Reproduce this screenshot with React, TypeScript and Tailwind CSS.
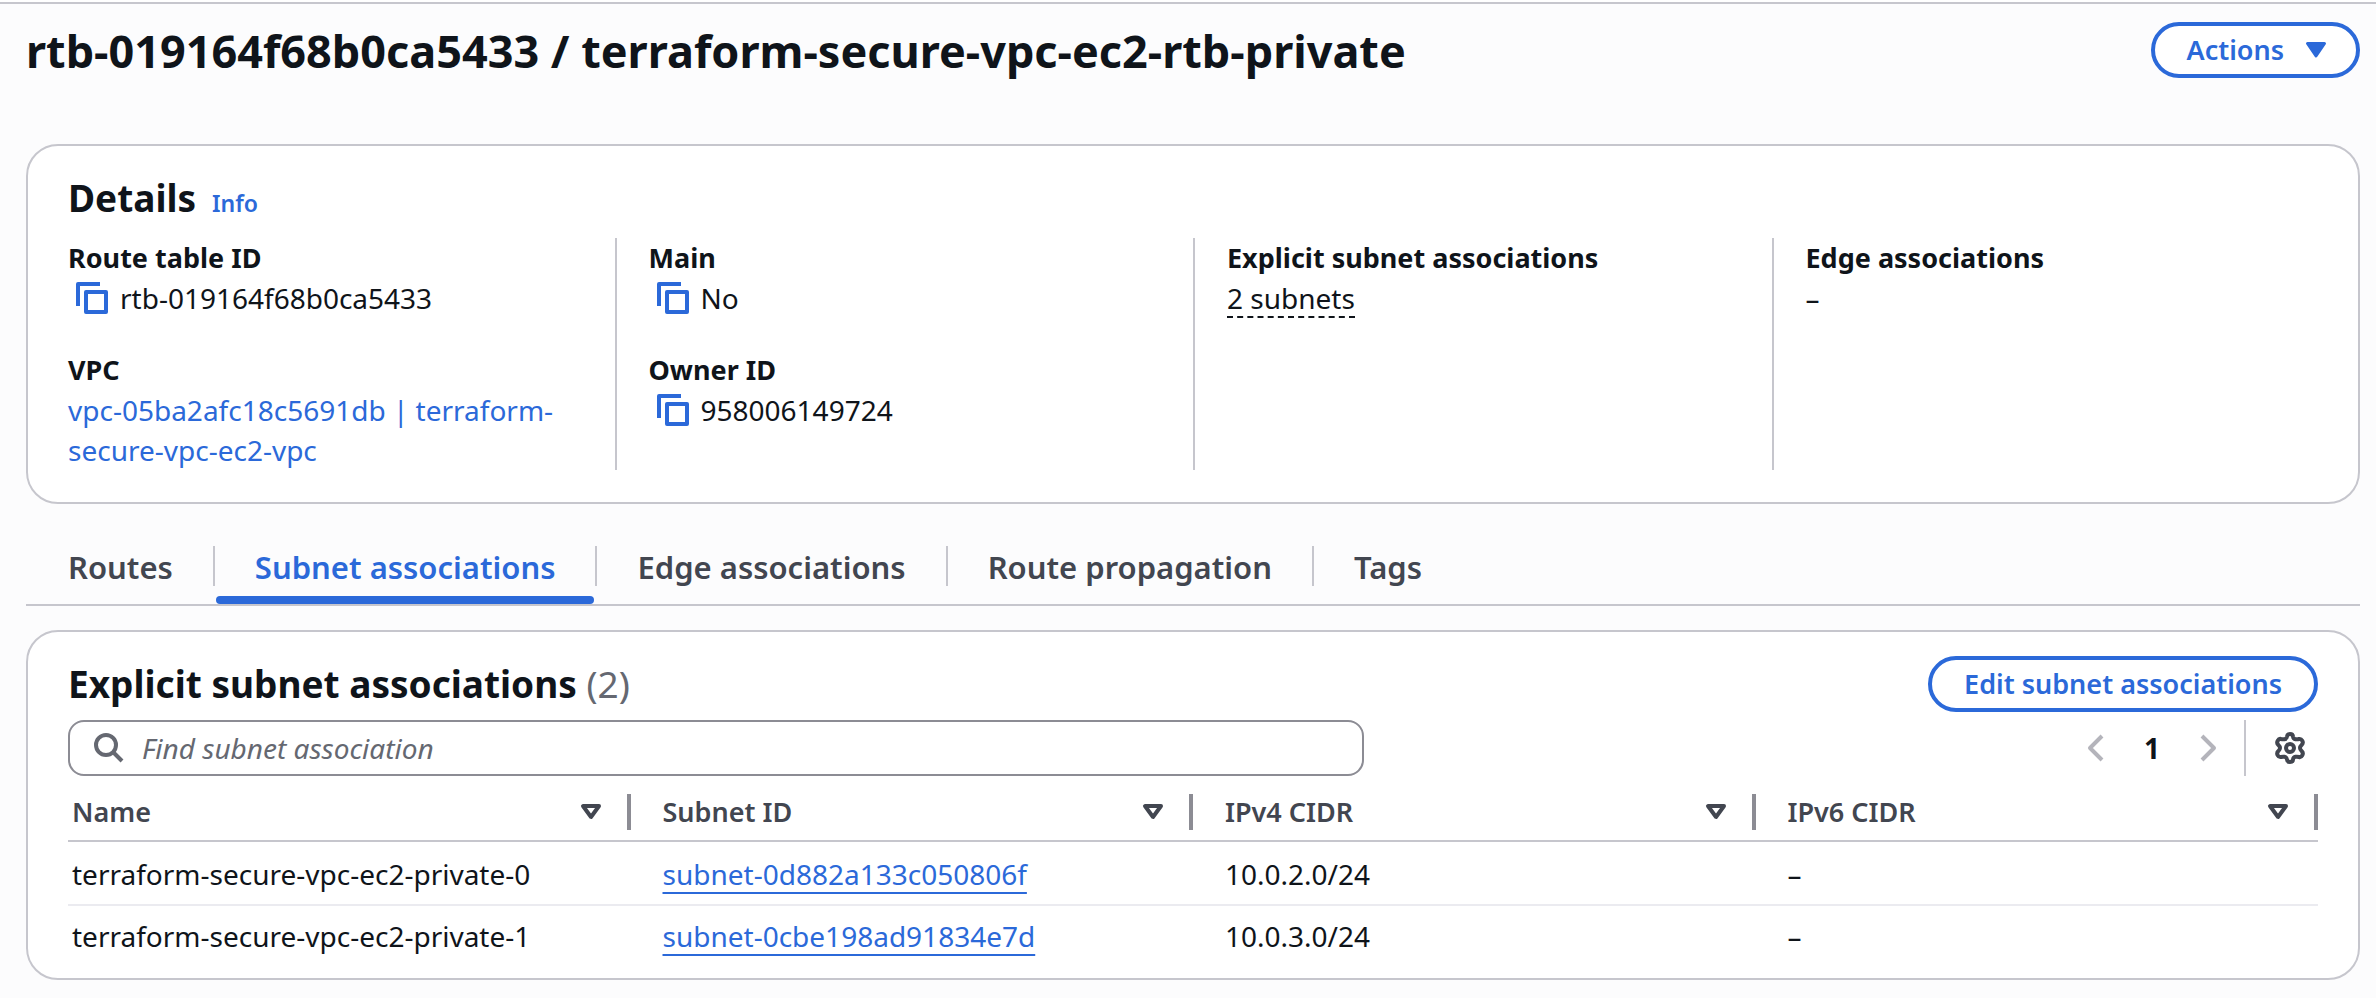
import type { ReactNode } from "react";

const CopyIcon = () => (
  <svg viewBox="0 0 32 32" className="size-8" fill="none" stroke="currentColor" strokeWidth="4" strokeLinejoin="round">
    <path d="M2 24V2h22" />
    <path d="M10 10h20v20H10z" />
  </svg>
);

function Copyable({ label, children }: { label: string; children: ReactNode }) {
  return (
    <span className="flex items-center gap-3 pl-2">
      <button type="button" aria-label={label} className="text-[#2b69d9]">
        <CopyIcon />
      </button>
      {children}
    </span>
  );
}

function Field({ label, children }: { label: string; children: ReactNode }) {
  return (
    <div>
      <dt className="text-[27px] font-bold">{label}</dt>
      <dd>{children}</dd>
    </div>
  );
}

const column = "flex flex-col gap-8 px-8 not-first:border-l-2 border-[#c6c6cd]";

const tabs = ["Routes", "Subnet associations", "Edge associations", "Route propagation", "Tags"];
const columns = ["Name", "Subnet ID", "IPv4 CIDR", "IPv6 CIDR"];
const rows = [
  { name: "terraform-secure-vpc-ec2-private-0", id: "subnet-0d882a133c050806f", v4: "10.0.2.0/24", v6: "–" },
  { name: "terraform-secure-vpc-ec2-private-1", id: "subnet-0cbe198ad91834e7d", v4: "10.0.3.0/24", v6: "–" },
];

export default function App() {
  return (
    <div className="min-h-screen bg-white pt-[2px] font-['Noto_Sans',sans-serif] text-[28px] leading-10 text-[#0f141a]">
      <main className="min-h-screen border-t-2 border-[#c6c6cd] bg-[#fcfcfd] pr-4 pb-4 pl-[26px]">
        <header className="flex items-start justify-between pt-[18px] pb-16">
          <h1 className="text-[45px] leading-[58px] font-bold">
            rtb-019164f68b0ca5433 / terraform-secure-vpc-ec2-rtb-private
          </h1>
          <button
            type="button"
            className="flex h-14 items-center gap-5 rounded-full border-4 border-[#2b69d9] bg-white px-7 pl-8 text-[27px] font-semibold text-[#2b69d9]"
          >
            Actions
            <svg viewBox="0 0 24 20" className="h-5 w-6" fill="currentColor" stroke="currentColor" strokeWidth="3" strokeLinejoin="round">
              <path d="M3.500 3.500h17L12 16z" />
            </svg>
          </button>
        </header>

        <section className="rounded-[32px] border-2 border-[#c6c6cd] bg-white px-10 pt-7 pb-8">
          <div className="flex items-baseline gap-4">
            <h2 className="text-[37px] leading-[48px] font-bold">Details</h2>
            <a href="#info" className="text-[23px] leading-8 font-semibold text-[#2b69d9]">Info</a>
          </div>
          <dl className="-mx-8 mt-4 grid grid-cols-4">
            <div className={column}>
              <Field label="Route table ID">
                <Copyable label="Copy route table ID">rtb-019164f68b0ca5433</Copyable>
              </Field>
              <Field label="VPC">
                <a href="#vpc" className="text-[#2b69d9]">vpc-05ba2afc18c5691db | terraform-secure-vpc-ec2-vpc</a>
              </Field>
            </div>
            <div className={column}>
              <Field label="Main">
                <Copyable label="Copy main">No</Copyable>
              </Field>
              <Field label="Owner ID">
                <Copyable label="Copy owner ID">958006149724</Copyable>
              </Field>
            </div>
            <div className={column}>
              <Field label="Explicit subnet associations">
                <button type="button" className="border-b-2 border-dashed border-[#0f141a] leading-9">2 subnets</button>
              </Field>
            </div>
            <div className={column}>
              <Field label="Edge associations">–</Field>
            </div>
          </dl>
        </section>

        <nav className="mt-[34px] flex border-b-2 border-[#c6c6cd] pl-[3px] text-[31px] font-semibold text-[#424650]">
          {tabs.map((tab, i) => (
            <div key={tab} className="flex">
              <button
                type="button"
                className={
                  i === 1
                    ? "flex flex-col gap-2 pt-2 text-[#2b69d9]"
                    : "flex flex-col gap-2 pt-2"
                }
              >
                <span className="px-[39px] py-[1px]">{tab}</span>
                <span className={i === 1 ? "h-2 w-full rounded-[4px] bg-[#2b69d9]" : "h-2 w-full"} />
              </button>
              {i < tabs.length - 1 && <span className="mx-[1px] mt-2 h-10 w-[2px] bg-[#c6c6cd]" />}
            </div>
          ))}
        </nav>

        <section className="mt-6 rounded-[32px] border-2 border-[#c6c6cd] bg-white px-10 pt-6 pb-3">
          <div className="flex items-center justify-between">
            <h2 className="text-[37px] leading-[56px] font-bold">
              Explicit subnet associations <span className="font-normal text-[#656871]">(2)</span>
            </h2>
            <button
              type="button"
              className="h-14 rounded-full border-4 border-[#2b69d9] bg-white px-8 text-[27px] leading-[48px] font-semibold text-[#2b69d9]"
            >
              Edit subnet associations
            </button>
          </div>

          <div className="mt-2 flex items-center justify-between">
            <label className="flex h-14 w-[1296px] items-center gap-4 rounded-2xl border-2 border-[#8c8c94] bg-white pl-6 text-[#656871]">
              <svg viewBox="0 0 32 32" className="size-8" fill="none" stroke="currentColor" strokeWidth="4">
                <circle cx="12" cy="13" r="10" />
                <path d="M19 20l9 9" />
              </svg>
              <input
                type="search"
                aria-label="Find subnet association"
                placeholder="Find subnet association"
                className="min-w-0 flex-1 bg-transparent italic outline-none placeholder:text-[#656871]"
              />
            </label>
            <div className="flex items-center">
              <button type="button" aria-label="Previous page" className="text-[#b4b4bb]">
                <svg viewBox="0 0 32 32" className="size-8" fill="none" stroke="currentColor" strokeWidth="4" strokeLinejoin="round">
                  <path d="M22 4L10 16l12 12" />
                </svg>
              </button>
              <button type="button" aria-label="Page 1" className="w-20 font-bold">1</button>
              <button type="button" aria-label="Next page" className="text-[#b4b4bb]">
                <svg viewBox="0 0 32 32" className="size-8" fill="none" stroke="currentColor" strokeWidth="4" strokeLinejoin="round">
                  <path d="M10 4l12 12-12 12" />
                </svg>
              </button>
              <span className="ml-5 h-14 w-[2px] bg-[#c6c6cd]" />
              <button type="button" aria-label="Preferences" className="mr-3 ml-7 text-[#424650]">
                <svg viewBox="0 0 32 32" className="size-8" fill="none" stroke="currentColor" strokeWidth="4" strokeLinejoin="round">
                  <circle cx="16" cy="16" r="4" />
                  <path d="M13 4.500Q13.200 2 16 2T19 4.500Q19.300 6.800 21.500 7.200Q23.500 7.400 25 7Q27 6.500 28.300 8.800T27.600 13Q26 14.500 26 16T27.600 19Q29.600 20.800 28.300 23.200T25 25Q23.500 24.600 21.500 24.800Q19.300 25.200 19 27.500Q18.800 30 16 30T13 27.500Q12.700 25.200 10.500 24.800Q8.500 24.600 7 25Q5 25.500 3.700 23.200T4.400 19Q6 17.500 6 16T4.400 13Q2.400 11.200 3.700 8.800T7 7Q8.500 7.400 10.500 7.200Q12.700 6.800 13 4.500z" />
                </svg>
              </button>
            </div>
          </div>

          <table className="mt-3 w-full table-fixed border-collapse text-left">
            <thead>
              <tr className="border-b-2 border-[#c6c6cd] text-[27px] text-[#424650]">
                {columns.map((name) => (
                  <th key={name} scope="col" className="pt-[6px] pb-[10px] pl-8 font-semibold first:pl-1">
                    <div className="flex h-9 items-center justify-between border-r-4 border-[#8c8c94] pr-6">
                      {name}
                      <button type="button" aria-label={`Sort by ${name}`}>
                        <svg viewBox="0 0 24 20" className="h-5 w-6" fill="none" stroke="currentColor" strokeWidth="4" strokeLinejoin="round">
                          <path d="M4 4h16L12 15z" />
                        </svg>
                      </button>
                    </div>
                  </th>
                ))}
              </tr>
            </thead>
            <tbody>
              {rows.map((row) => (
                <tr key={row.id} className="border-b-2 border-[#ebebf0] first:[&>td]:pt-3 last:border-0">
                  <td className="py-[10px] pl-1">{row.name}</td>
                  <td className="py-[10px] pl-8">
                    <a href={`#${row.id}`} className="text-[#2b69d9] underline decoration-2 underline-offset-7">{row.id}</a>
                  </td>
                  <td className="py-[10px] pl-8">{row.v4}</td>
                  <td className="py-[10px] pl-8">{row.v6}</td>
                </tr>
              ))}
            </tbody>
          </table>
        </section>
      </main>
    </div>
  );
}
